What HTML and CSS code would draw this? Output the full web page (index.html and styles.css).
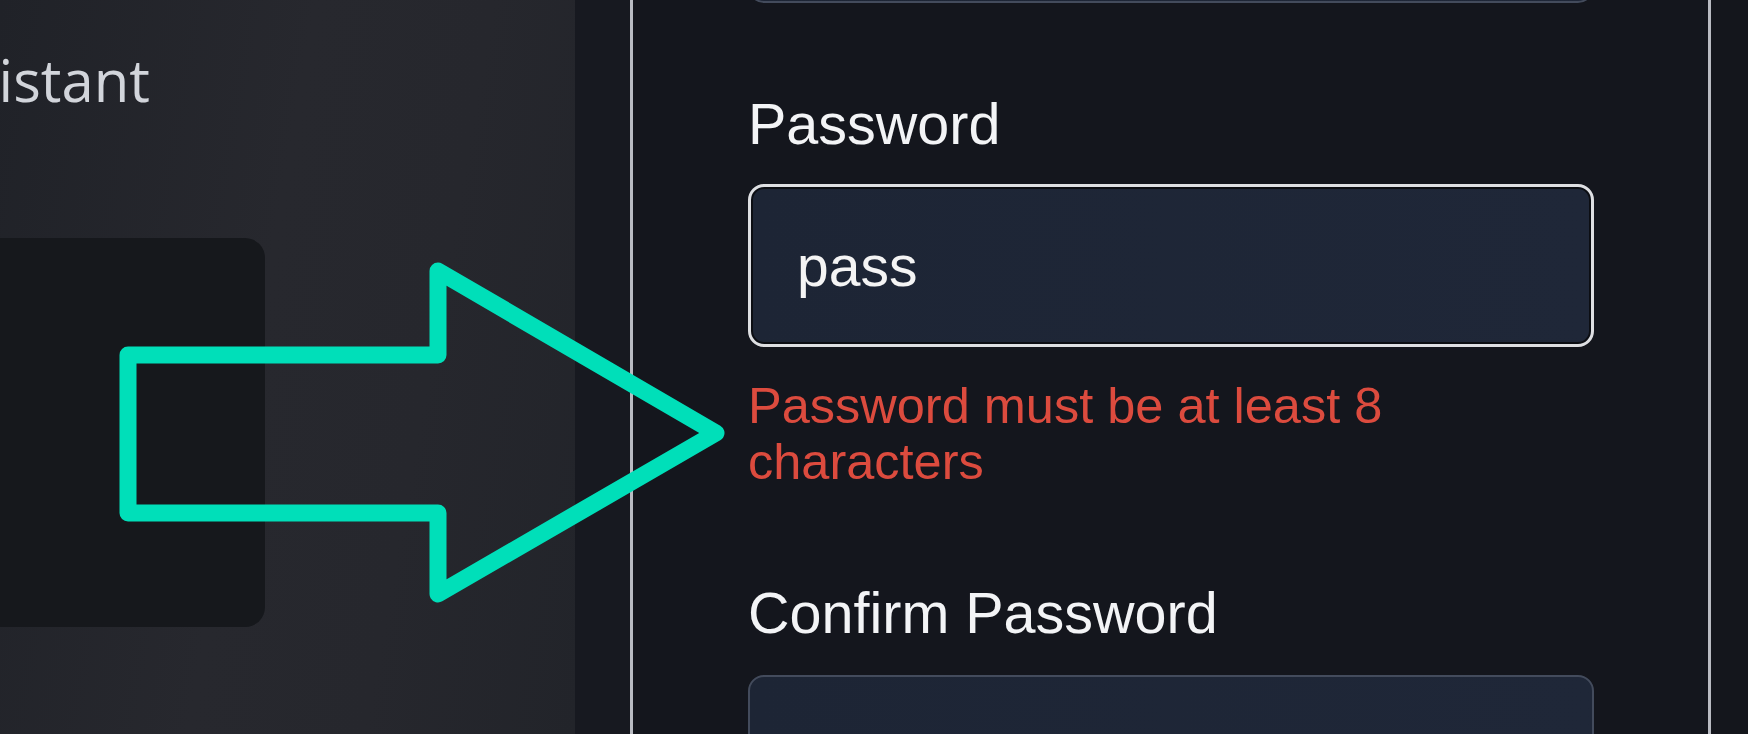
FILE: index.html
```html
<!DOCTYPE html>
<html lang="en">
<head>
<meta charset="utf-8">
<title>Sign up</title>
<link rel="stylesheet" href="styles.css">
</head>
<body>
<div class="app">
  <aside class="side">
    <div class="brand"><span class="brand-text">Assistant</span></div>
    <div class="card"></div>
  </aside>
  <div class="gutter"></div>
  <main class="form-panel">
    <div class="field field-prev">
      <input class="input" type="text" aria-label="Email">
    </div>
    <div class="field field-password">
      <label class="label" for="pw">Password</label>
      <input class="input input-focus" id="pw" type="text" value="pass">
      <p class="error">Password must be at least 8 characters</p>
    </div>
    <div class="field field-confirm">
      <label class="label" for="cpw">Confirm Password</label>
      <input class="input" id="cpw" type="text">
    </div>
  </main>
  <div class="outer"></div>
</div>
<svg class="arrow" width="1748" height="734" viewBox="0 0 1748 734" aria-hidden="true">
  <path d="M128 355 L438 355 L438 271 L716 433 L438 594 L438 513 L128 513 Z" fill="none" stroke="#00dfb9" stroke-width="17" stroke-linejoin="round"/>
</svg>
</body>
</html>
```
FILE: styles.css
```css
* { box-sizing: border-box; }
html, body {
  margin: 0;
  padding: 0;
  width: 1748px;
  height: 734px;
  overflow: hidden;
  background: #14161c;
}
.app {
  display: flex;
  height: 734px;
  overflow: hidden;
}
.side {
  width: 575px;
  flex: none;
  background: linear-gradient(100deg, #202228 0%, #27282e 45%, #26272d 70%, #22242a 100%);
  overflow: hidden;
}
.brand {
  width: 150px;
  margin-top: 44px;
  display: flex;
  justify-content: flex-end;
  white-space: nowrap;
}
.brand-text {
  font-family: "Open Sans", "Noto Sans", sans-serif;
  font-size: 58px;
  line-height: 72px;
  color: #d2d5db;
}
.card {
  margin-top: 122px;
  margin-left: -100px;
  width: 365px;
  height: 389px;
  border-radius: 20px;
  background: #16181c;
}
.gutter {
  width: 55px;
  flex: none;
  background: #171920;
}
.form-panel {
  width: 1081px;
  flex: none;
  background: #14161d;
  border-left: 3px solid #b9bbc2;
  border-right: 3px solid #b9bbc2;
  padding: 0 114px 0 115px;
  font-family: "Liberation Sans", Arial, sans-serif;
}
.outer {
  flex: 1;
  background: #14161c;
}
.field { display: flex; flex-direction: column; }
.field-prev { margin-top: -160px; }
.field-password { margin-top: 89px; }
.field-confirm { margin-top: 91px; }
.label {
  display: block;
  font-size: 57.5px;
  line-height: 64px;
  color: #f3f4f6;
  margin-bottom: 28px;
}
.field-confirm .label { margin-bottom: 30px; }
.input {
  display: block;
  width: 100%;
  height: 163px;
  margin: 0;
  padding: 0 0 0 46px;
  font-family: "Liberation Sans", Arial, sans-serif;
  font-size: 57px;
  line-height: 64px;
  color: #f4f4f4;
  background: linear-gradient(90deg, #1d2535 0%, #1f2738 100%);
  border: 2px solid #434b5c;
  border-radius: 16px;
  outline: none;
}
.input-focus {
  border: 3px solid #dedfe2;
  box-shadow: inset 0 0 0 2px #0c0e13;
}
.error {
  margin: 31px 0 0 0;
  font-size: 50.5px;
  line-height: 56px;
  color: #dc4b3e;
}
.arrow {
  position: absolute;
  left: 0;
  top: 0;
  pointer-events: none;
}
```
